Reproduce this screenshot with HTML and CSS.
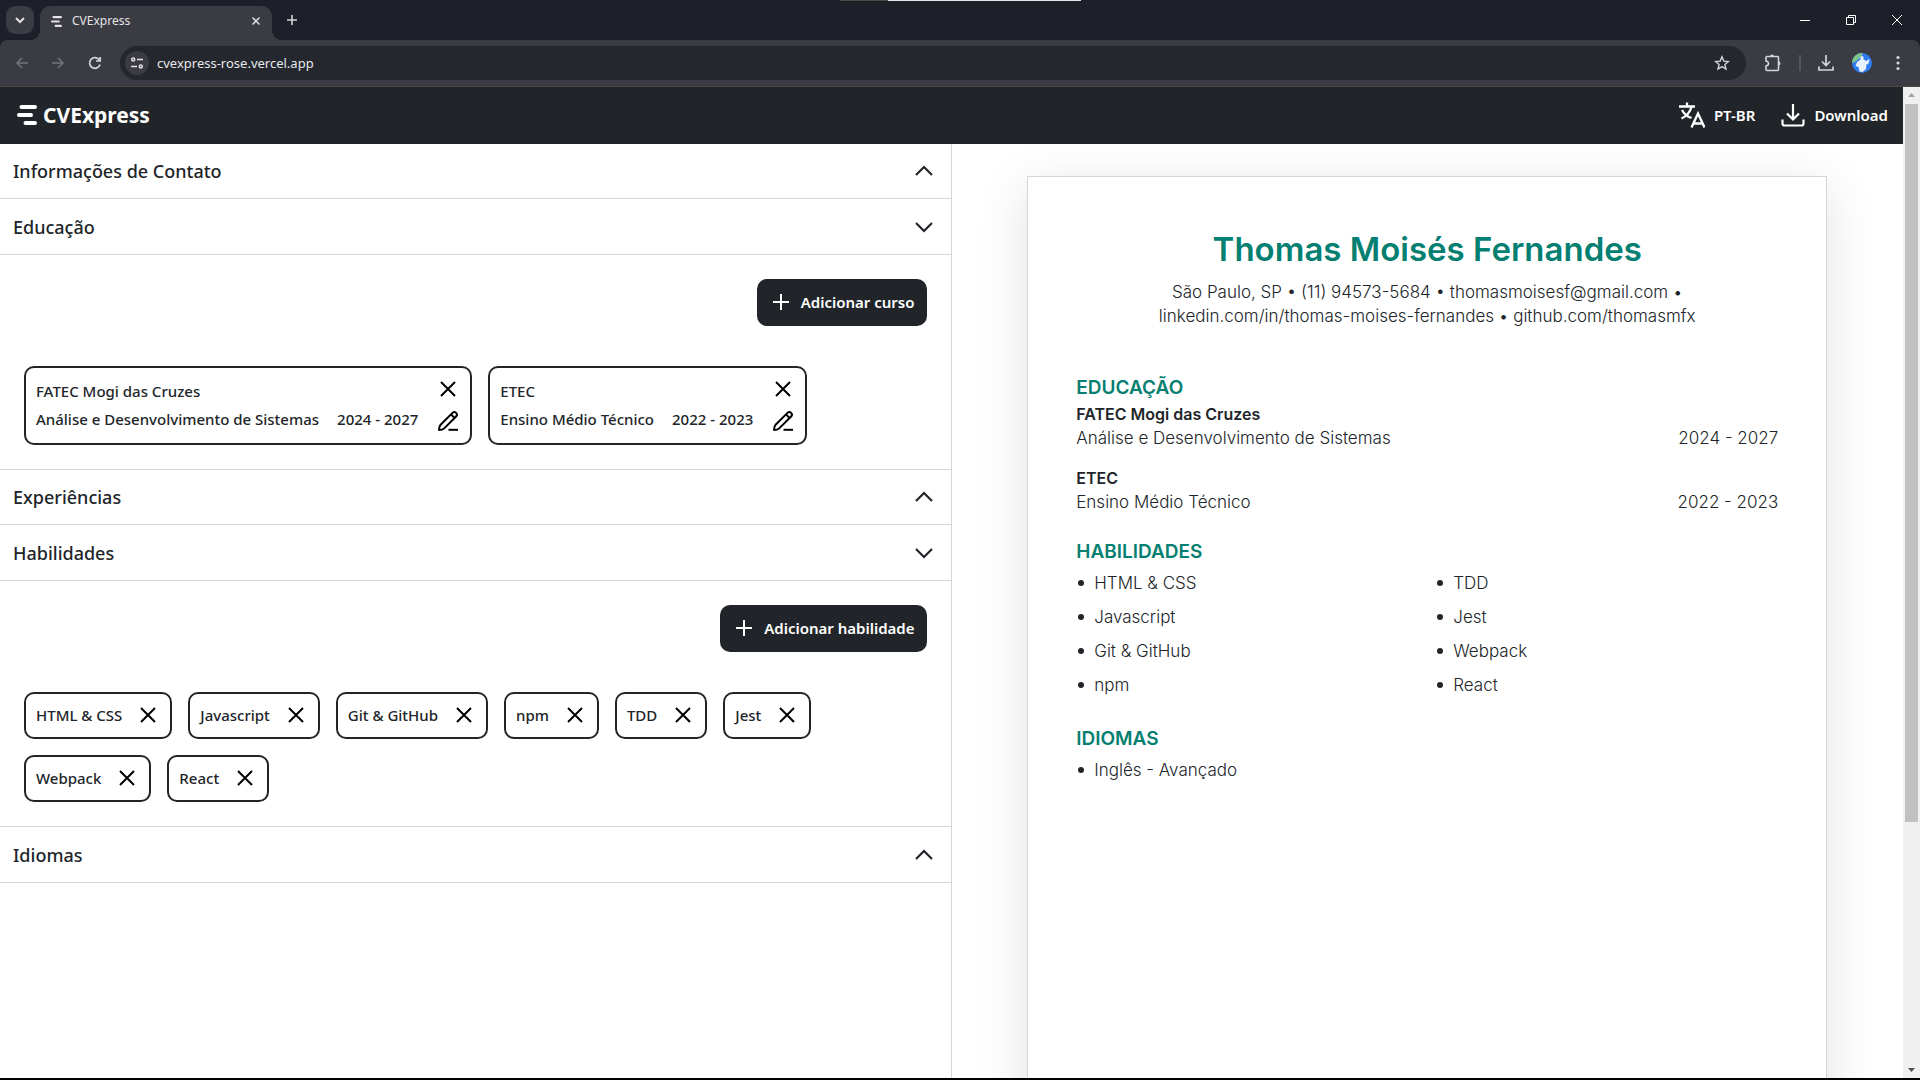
FILE: index.html
```html
<!DOCTYPE html>
<html lang="pt-BR">
<head>
<meta charset="utf-8">
<meta name="viewport" content="width=device-width, initial-scale=1">
<title>CVExpress</title>
<link rel="stylesheet" href="styles.css">
</head>
<body>
<svg class="sprite" aria-hidden="true">
  <symbol id="i-x" viewBox="0 0 24 24"><path d="M5 5l14 14M19 5L5 19" fill="none" stroke="currentColor" stroke-width="2"/></symbol>
  <symbol id="i-pen" viewBox="0 0 24 24"><path d="M3 21c0-2 .5-4 1.600-5.200L16.500 3.900a2.500 2.500 0 0 1 3.600 3.600L8.200 19.400C7 20.600 5 21 3 21zM15 5.400l3.600 3.600" fill="none" stroke="currentColor" stroke-width="2" stroke-linejoin="round"/><path d="M12.500 20.800H22" stroke="currentColor" stroke-width="2"/></symbol>
  <symbol id="i-up" viewBox="0 0 24 24"><path d="M4 16l8-8 8 8" fill="none" stroke="currentColor" stroke-width="2.200"/></symbol>
  <symbol id="i-down" viewBox="0 0 24 24"><path d="M4 8l8 8 8-8" fill="none" stroke="currentColor" stroke-width="2.200"/></symbol>
  <symbol id="i-plus" viewBox="0 0 24 24"><path d="M12 4v16M4 12h16" stroke="currentColor" stroke-width="2"/></symbol>
  <symbol id="i-logo" viewBox="0 0 20 20"><path d="M4.500 2h13.500M2 10h12M8.500 18h9.500" stroke="currentColor" stroke-width="4" stroke-linecap="round"/></symbol>
  <symbol id="i-download" viewBox="0 0 24 24"><path d="M12 1v15M6 10.500l6 6 6-6M1.500 16.500v4q0 2 2 2h17q2 0 2-2v-4" fill="none" stroke="currentColor" stroke-width="2.200"/></symbol>
</svg>

<div class="chrome">
  <div class="tabs">
    <span class="notch"></span>
    <button class="tab-search" aria-label="Pesquisar guias"><svg width="12" height="12" viewBox="0 0 12 12"><path d="M2 4l4 4 4-4" fill="none" stroke="currentColor" stroke-width="2"/></svg></button>
    <div class="tab">
      <svg class="fav" width="11" height="11"><use href="#i-logo"/></svg>
      <span class="tab-title">CVExpress</span>
      <button class="plain" aria-label="Fechar guia"><svg width="10" height="10" viewBox="0 0 10 10"><path d="M1.500 1.500l7 7M8.500 1.500l-7 7" stroke="currentColor" stroke-width="1.600"/></svg></button>
    </div>
    <button class="plain new-tab" aria-label="Nova guia"><svg width="10" height="10" viewBox="0 0 10 10"><path d="M5 0v10M0 5h10" stroke="currentColor" stroke-width="1.600"/></svg></button>
    <div class="window-buttons">
      <button class="plain" aria-label="Minimizar"><svg width="10" height="10" viewBox="0 0 10 10"><path d="M0 5.500h10" stroke="currentColor"/></svg></button>
      <button class="plain" aria-label="Restaurar"><svg width="10" height="10" viewBox="0 0 10 10"><path d="M.5 2.500h7v7h-7zM2.500 2.500v-2h7v7h-2" fill="none" stroke="currentColor"/></svg></button>
      <button class="plain" aria-label="Fechar"><svg width="10" height="10" viewBox="0 0 10 10"><path d="M0 0l10 10M10 0L0 10" stroke="currentColor"/></svg></button>
    </div>
  </div>

  <div class="toolbar">
    <div class="nav-buttons">
      <button class="plain dim" aria-label="Voltar"><svg width="12" height="12" viewBox="0 0 12 12"><path d="M12 6H1M6 1L1 6l5 5" fill="none" stroke="currentColor" stroke-width="1.500"/></svg></button>
      <button class="plain dim" aria-label="Avançar"><svg width="12" height="12" viewBox="0 0 12 12"><path d="M0 6h11M6 1l5 5-5 5" fill="none" stroke="currentColor" stroke-width="1.500"/></svg></button>
      <button class="plain" aria-label="Recarregar"><svg width="14" height="14" viewBox="0 0 14 14"><path d="M12 8.500A5.300 5.300 0 1 1 11.300 4M12.200 1v4H8" fill="none" stroke="currentColor" stroke-width="1.700"/></svg></button>
    </div>
    <div class="address">
      <button class="site-info" aria-label="Informações do site"><svg width="12" height="12" viewBox="0 0 12 12"><g fill="none" stroke="currentColor" stroke-width="1.500"><circle cx="2.200" cy="2.500" r="1.500"/><path d="M6 2.500h6M0 9.500h6"/><circle cx="9.800" cy="9.500" r="1.500"/></g></svg></button>
      <input class="url" aria-label="Endereço" value="cvexpress-rose.vercel.app">
      <button class="plain" aria-label="Favoritar"><svg width="16" height="16" viewBox="0 0 16 16"><path d="M8 1.800l1.800 4.300 4.600.4-3.500 3 1.100 4.500L8 11.600 4 14l1.100-4.500-3.500-3 4.600-.4z" fill="none" stroke="currentColor" stroke-width="1.400"/></svg></button>
    </div>
    <button class="plain ext" aria-label="Extensões"><svg width="18" height="18" viewBox="0 0 18 18"><path d="M2 3.500q0-1 1-1h10.500q1 0 1 1v12q0 1-1 1H3q-1 0-1-1v-3.500q2.500-.5 2.500-2.500T2 7z" fill="none" stroke="currentColor" stroke-width="1.600"/><path d="M6 2.500a2 2 0 0 1 4 0zM14.500 7.500a2 2 0 0 1 0 4z" fill="currentColor"/></svg></button>
    <span class="divider"></span>
    <button class="plain" aria-label="Downloads"><svg width="16" height="16" viewBox="0 0 16 16"><path d="M8 0v10M4 6.500l4 4 4-4M1 11.500v3.500h14v-3.500" fill="none" stroke="currentColor" stroke-width="1.700"/></svg></button>
    <button class="plain avatar" aria-label="Perfil"><svg width="20" height="20" viewBox="0 0 20 20"><circle cx="10" cy="10" r="10" fill="#2f7bef"/><path d="M0 10A10 10 0 0 1 11 0L9 4 3 9z" fill="#7cc38a"/><path d="M8.500 4q1.500-2 3 0v2.500l3 1.500 2.500-2 .5 1.500-1.500 4-1.500-.5-.5 5-3.500 3-3-.5-1-4.500-3-1 1.500-4 3.500-2.500z" fill="#e8f1ff"/></svg></button>
    <button class="plain" aria-label="Menu"><svg width="4" height="16" viewBox="0 0 4 16"><g fill="currentColor"><circle cx="2" cy="2.500" r="1.600"/><circle cx="2" cy="8" r="1.600"/><circle cx="2" cy="13.500" r="1.600"/></g></svg></button>
  </div>
</div>

<div class="viewport">
  <div class="page">
    <header class="header">
      <h1 class="brand"><svg width="20" height="20"><use href="#i-logo"/></svg>CVExpress</h1>
      <div class="actions">
        <button class="action"><svg width="26" height="26" viewBox="0 0 26 26"><path d="M0 4.500h16M8 .5v4M3 8c2 4 5 6.500 9.500 8M12.500 5C11 10 8 14 2.500 16.500M12.500 25.500L19 11.500l6.500 14M14.500 21.500h9" fill="none" stroke="currentColor" stroke-width="2.300"/></svg>PT-BR</button>
        <button class="action"><svg width="24" height="24"><use href="#i-download"/></svg>Download</button>
      </div>
    </header>

    <main class="panes">
      <section class="editor">
        <button class="fold">Informações de Contato<svg width="24" height="24"><use href="#i-up"/></svg></button>

        <button class="fold open">Educação<svg width="24" height="24"><use href="#i-down"/></svg></button>
        <div class="fold-body">
          <button class="add"><svg width="24" height="24"><use href="#i-plus"/></svg>Adicionar curso</button>
          <div class="items">
            <article class="course">
              <div class="course-text">
                <span>FATEC Mogi das Cruzes</span>
                <div class="course-line"><span>Análise e Desenvolvimento de Sistemas</span><span>2024 - 2027</span></div>
              </div>
              <div class="course-tools">
                <button class="tool" aria-label="Remover FATEC"><svg width="24" height="24"><use href="#i-x"/></svg></button>
                <button class="tool" aria-label="Editar FATEC"><svg width="24" height="24"><use href="#i-pen"/></svg></button>
              </div>
            </article>
            <article class="course">
              <div class="course-text">
                <span>ETEC</span>
                <div class="course-line"><span>Ensino Médio Técnico</span><span>2022 - 2023</span></div>
              </div>
              <div class="course-tools">
                <button class="tool" aria-label="Remover ETEC"><svg width="24" height="24"><use href="#i-x"/></svg></button>
                <button class="tool" aria-label="Editar ETEC"><svg width="24" height="24"><use href="#i-pen"/></svg></button>
              </div>
            </article>
          </div>
        </div>

        <button class="fold">Experiências<svg width="24" height="24"><use href="#i-up"/></svg></button>

        <button class="fold open">Habilidades<svg width="24" height="24"><use href="#i-down"/></svg></button>
        <div class="fold-body">
          <button class="add"><svg width="24" height="24"><use href="#i-plus"/></svg>Adicionar habilidade</button>
          <div class="items">
            <div class="chip">HTML &amp; CSS<button class="tool" aria-label="Remover HTML &amp; CSS"><svg width="24" height="24"><use href="#i-x"/></svg></button></div>
            <div class="chip">Javascript<button class="tool" aria-label="Remover Javascript"><svg width="24" height="24"><use href="#i-x"/></svg></button></div>
            <div class="chip">Git &amp; GitHub<button class="tool" aria-label="Remover Git &amp; GitHub"><svg width="24" height="24"><use href="#i-x"/></svg></button></div>
            <div class="chip">npm<button class="tool" aria-label="Remover npm"><svg width="24" height="24"><use href="#i-x"/></svg></button></div>
            <div class="chip">TDD<button class="tool" aria-label="Remover TDD"><svg width="24" height="24"><use href="#i-x"/></svg></button></div>
            <div class="chip">Jest<button class="tool" aria-label="Remover Jest"><svg width="24" height="24"><use href="#i-x"/></svg></button></div>
            <div class="chip">Webpack<button class="tool" aria-label="Remover Webpack"><svg width="24" height="24"><use href="#i-x"/></svg></button></div>
            <div class="chip">React<button class="tool" aria-label="Remover React"><svg width="24" height="24"><use href="#i-x"/></svg></button></div>
          </div>
        </div>

        <button class="fold">Idiomas<svg width="24" height="24"><use href="#i-up"/></svg></button>
      </section>

      <section class="preview">
        <article class="cv">
          <h2 class="cv-name">Thomas Moisés Fernandes</h2>
          <p class="cv-contact">São Paulo, SP • (11) 94573-5684 • thomasmoisesf@gmail.com •<br>linkedin.com/in/thomas-moises-fernandes • github.com/thomasmfx</p>

          <section class="cv-section">
            <h3>EDUCAÇÃO</h3>
            <div class="cv-courses">
              <div>
                <h4>FATEC Mogi das Cruzes</h4>
                <p class="cv-line"><span>Análise e Desenvolvimento de Sistemas</span><span>2024 - 2027</span></p>
              </div>
              <div>
                <h4>ETEC</h4>
                <p class="cv-line"><span>Ensino Médio Técnico</span><span>2022 - 2023</span></p>
              </div>
            </div>
          </section>

          <section class="cv-section">
            <h3>HABILIDADES</h3>
            <ul class="cv-list">
              <li>HTML &amp; CSS</li><li>Javascript</li><li>Git &amp; GitHub</li><li>npm</li>
              <li>TDD</li><li>Jest</li><li>Webpack</li><li>React</li>
            </ul>
          </section>

          <section class="cv-section">
            <h3>IDIOMAS</h3>
            <ul class="cv-list">
              <li>Inglês - Avançado</li>
            </ul>
          </section>
        </article>
      </section>
    </main>
  </div>
  <div class="scrollbar" aria-hidden="true">
    <svg width="7" height="4" viewBox="0 0 7 4"><path d="M0 4L3.500 0 7 4z" fill="#a3a3a3"/></svg>
    <div class="track"><div class="thumb"></div></div>
    <svg width="7" height="4" viewBox="0 0 7 4"><path d="M0 0l3.500 4L7 0z" fill="#505050"/></svg>
  </div>
</div>
</body>
</html>
```
FILE: styles.css
```css
:root {
  --ink: #212529;
  --line: #d5d6d7;
  --strip: #1d2028;
  --bar: #3a3b43;
  --teal: #057f71;
}
* { box-sizing: border-box; }
body {
  margin: 0;
  height: 100vh;
  display: flex;
  flex-direction: column;
  overflow: hidden;
  background: #fff;
  color: var(--ink);
  border-bottom: 2px solid #000;
  font: 500 15px/24px "Noto Sans", sans-serif;
}
h1, h2, h3, h4, p, ul { margin: 0; padding: 0; }
button { font: inherit; color: inherit; border: 0; padding: 0; background: none; cursor: pointer; }
svg { display: block; flex: none; }
.sprite { position: absolute; width: 0; height: 0; }
.plain { display: flex; align-items: center; justify-content: center; color: #d3d5dc; }

/* browser tab strip */
.chrome { flex: none; background: var(--strip); }
.tabs {
  position: relative;
  display: flex;
  align-items: flex-end;
  height: 40px;
  padding-left: 6px;
}
.notch {
  position: absolute;
  top: 0;
  left: 840px;
  width: 241px;
  height: 1px;
  background: linear-gradient(to right, #4c4b49 48px, #e3e4e4 48px);
}
.tab-search {
  display: flex;
  align-items: center;
  justify-content: center;
  width: 28px;
  height: 28px;
  margin: 0 6px 6px 0;
  border-radius: 9px;
  background: var(--bar);
  color: #e3e3e3;
}
.tab {
  position: relative;
  display: flex;
  align-items: center;
  width: 232px;
  height: 34px;
  padding: 0 11px 4px;
  border-radius: 10px 10px 0 0;
  background: var(--bar);
  color: #e3e3e6;
  font-size: 12px;
  font-weight: 400;
}
.tab::before, .tab::after {
  content: "";
  position: absolute;
  bottom: 0;
  width: 10px;
  height: 10px;
}
.tab::before { right: 100%; background: radial-gradient(circle at 0 0, transparent 10px, var(--bar) 10px); }
.tab::after { left: 100%; background: radial-gradient(circle at 100% 0, transparent 10px, var(--bar) 10px); }
.fav { margin-right: 10px; }
.tab-title { flex: 1; }
.new-tab { width: 40px; height: 40px; }
.window-buttons { display: flex; margin-left: auto; height: 40px; }
.window-buttons .plain { width: 46px; color: #fff; }

/* address bar */
.toolbar {
  display: flex;
  align-items: center;
  height: 47px;
  padding: 0 20px 0 16px;
  border-bottom: 1px solid #4b4846;
  border-radius: 8px 8px 0 0;
  background: var(--bar);
}
.nav-buttons { display: flex; gap: 24px; width: 104px; }
.dim { color: #75767c; }
.address {
  flex: 1;
  display: flex;
  align-items: center;
  height: 34px;
  padding: 0 16px 0 5px;
  border-radius: 17px;
  background: #25272f;
}
.site-info {
  display: flex;
  align-items: center;
  justify-content: center;
  width: 24px;
  height: 24px;
  border-radius: 50%;
  background: var(--bar);
  color: #e3e3e3;
}
.url {
  flex: 1;
  padding: 0 8px;
  border: 0;
  outline: 0;
  background: none;
  color: #e6e7ea;
  font: 400 13px/20px "Noto Sans", sans-serif;
}
.ext { margin-left: 18px; }
.divider { width: 2px; height: 16px; margin: 0 17px; background: #55565e; }
.avatar { margin: 0 24px 0 18px; }

/* page */
.viewport { flex: 1; min-height: 0; display: flex; }
.page { flex: 1; min-width: 0; display: flex; flex-direction: column; overflow: hidden; }
.header {
  flex: none;
  display: flex;
  align-items: center;
  justify-content: space-between;
  height: 57px;
  padding: 0 15px 1px 17px;
  background: var(--ink);
  color: #fff;
}
.brand { display: flex; align-items: center; gap: 6px; font-size: 21px; font-weight: 700; }
.actions { display: flex; gap: 26px; }
.action { display: flex; align-items: center; gap: 9px; font-weight: 600; }
.panes { flex: 1; min-height: 0; display: grid; grid-template-columns: 1fr 1fr; }

.editor { border-right: 1px solid var(--line); }
.fold {
  display: flex;
  align-items: center;
  justify-content: space-between;
  width: 100%;
  height: 55px;
  padding: 0 15px 0 13px;
  border-bottom: 1px solid var(--line);
  font-size: 18px;
}
.fold.open, .fold:last-child { height: 56px; }
.fold-body {
  display: flex;
  flex-direction: column;
  gap: 40px;
  padding: 24px;
  border-bottom: 1px solid var(--line);
}
.add {
  align-self: flex-end;
  display: flex;
  align-items: center;
  gap: 8px;
  height: 47px;
  padding: 0 12px 2px;
  border-radius: 10px;
  background: var(--ink);
  color: #fff;
  font-weight: 600;
}
.items { display: flex; flex-wrap: wrap; gap: 16px; }
.course, .chip {
  display: flex;
  align-items: center;
  padding: 0 10px 2px;
  border: 2px solid var(--ink);
  border-radius: 10px;
}
.course { gap: 18px; height: 79px; }
.course-text { display: flex; flex-direction: column; gap: 4px; }
.course-line { display: flex; gap: 18px; }
.course-tools { display: flex; flex-direction: column; gap: 8px; }
.chip { gap: 14px; height: 47px; }
.tool { color: #000; }

/* curriculum sheet */
.preview { display: flex; justify-content: center; align-items: flex-start; padding-top: 32px; overflow: hidden; }
.cv {
  width: 100%;
  max-width: 800px;
  min-height: 1131px;
  padding: 48px;
  border: 1px solid var(--line);
  background: #fff;
  box-shadow: 0 12px 48px rgba(0, 0, 0, .12);
  font: 300 17px/24px Inter, sans-serif;
}
.cv-name { text-align: center; color: var(--teal); font-size: 33px; line-height: 48px; font-weight: 600; }
.cv-contact { margin: 7px 0 46px; text-align: center; }
.cv-section { margin-bottom: 24px; }
.cv-section h3 { color: var(--teal); font-size: 19px; line-height: 28px; font-weight: 600; }
.cv-section h4 { font-size: 16px; font-weight: 600; }
.cv-courses { display: grid; gap: 16px; }
.cv-line { display: flex; justify-content: space-between; }
.cv-list {
  display: grid;
  grid-template-columns: 1fr 1fr;
  grid-template-rows: repeat(4, auto);
  grid-auto-flow: column;
  gap: 10px 16px;
  padding: 5px 0 4px;
  list-style: none;
}
.cv-list li { display: flex; align-items: center; gap: 10px; padding-left: 2px; }
.cv-list li::before { content: ""; width: 6px; height: 6px; border-radius: 50%; background: var(--ink); }

/* scrollbar */
.scrollbar {
  flex: none;
  display: flex;
  flex-direction: column;
  align-items: center;
  gap: 7px;
  width: 17px;
  padding: 6px 0;
  background: #f0f0f0;
}
.track { flex: 1; width: 13px; }
.thumb { height: 75%; background: #c1c1c1; }
```
